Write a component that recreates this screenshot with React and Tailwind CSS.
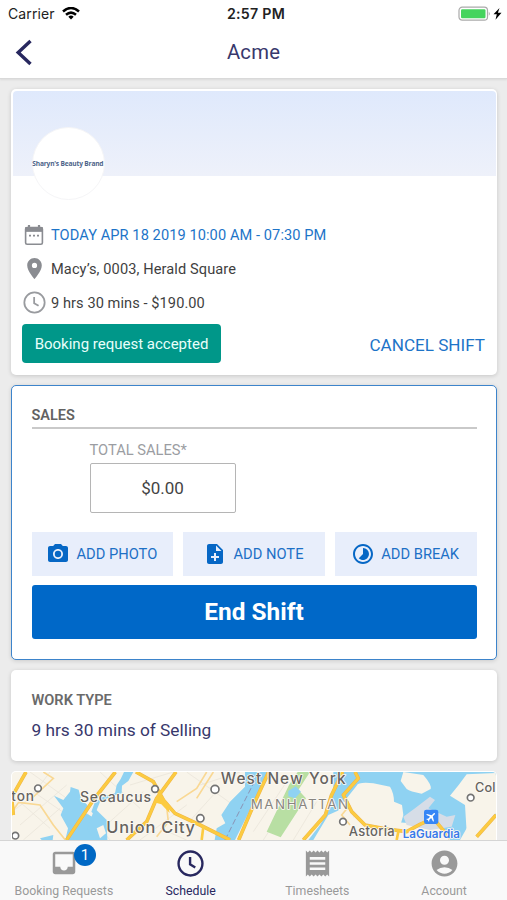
import React from "react";
import {
  MdPlace,
  MdPhotoCamera,
  MdNoteAdd,
  MdTimelapse,
  MdInbox,
  MdReceipt,
  MdAccountCircle,
} from "react-icons/md";

function StatusBar() {
  return (
    <div className="grid h-[27px] grid-cols-[1fr_auto_1fr] items-center font-['Inter'] text-[14px] leading-[27px] text-[#222]">
      <div className="flex items-center pl-[8px]">
        <span className="tracking-[0.1px]">Carrier</span>
        <svg className="ml-[7px] h-[13px] w-[18px]" viewBox="0 0 18 13" fill="none" stroke="#000" strokeWidth="2.5">
          <path d="M1 4.500Q9-2.500 17 4.500" />
          <path d="M4 7.800Q9 3.400 14 7.800" />
          <path d="M6.3 9.800Q9 7.400 11.7 9.800L9 12.500Z" fill="#000" stroke="none" />
        </svg>
      </div>
      <span className="pl-[5px] text-[14.2px] font-semibold tracking-[0.25px]">2:57 PM</span>
      <div className="flex justify-end pr-[4px]">
        <svg className="h-[16px] w-[45px]" viewBox="0 0 45 16">
          <rect x="1" y="1.2" width="28.5" height="13" rx="3.2" fill="#fff" stroke="#aaa" strokeWidth="1.2" />
          <rect x="3" y="3.2" width="24.5" height="9" rx="1.2" fill="#45d45e" />
          <path d="M30.8 5.7q2 2 0 4z" fill="#aaa" />
          <path d="m41.500 2-6 6.300h3.300L37.500 13.700l6-7h-3.600z" fill="#000" />
        </svg>
      </div>
    </div>
  );
}

function Header() {
  return (
    <header className="h-[79px] shrink-0 border-b border-[#d9d9d9] bg-white shadow-[0_1px_2px_rgba(0,0,0,0.08)]">
      <StatusBar />
      <div className="grid h-[51px] grid-cols-[1fr_auto_1fr] items-center">
        <svg className="ml-[15px] h-[28px] w-[20px]" viewBox="0 0 20 28" fill="none" stroke="#28285f" strokeWidth="3.4">
          <path d="M15.5 2 3.2 13.4 15.5 25" />
        </svg>
        <h1 className="text-[20.3px] tracking-[0.2px] text-[#38386c]">Acme</h1>
      </div>
    </header>
  );
}

function CalendarIcon() {
  return (
    <svg className="h-[22px] w-[20px]" viewBox="0 0 20 22" fill="none" stroke="#8a8c91">
      <rect x="1.6" y="3.6" width="16.8" height="16.6" rx="1.5" strokeWidth="1.6" />
      <path d="M1.6 3.6h16.8v3.7H1.6z" fill="#8a8c91" />
      <path d="M5 1v3M15 1v3" strokeWidth="2.2" />
      <path d="M5 11.6h2M9 11.6h2M13 11.6h2" strokeWidth="1.8" />
    </svg>
  );
}

function ClockIcon({ className, stroke, width }) {
  return (
    <svg className={className} viewBox="0 0 26 26" fill="none" stroke={stroke} strokeWidth={width}>
      <circle cx="13" cy="13" r="11.5" />
      <path d="M12.6 6.8v7l5 3" />
    </svg>
  );
}

function InfoRow({ icon, children, className = "text-[#3f3f3f]" }) {
  return (
    <div className={"flex h-[34px] items-center whitespace-nowrap text-[14.6px] " + className}>
      <span className="mr-[6px] ml-px flex w-[22px] justify-center">{icon}</span>
      {children}
    </div>
  );
}

function BookingCard() {
  return (
    <section className="h-[286px] shrink-0 rounded-[5px] bg-white p-[1.5px] shadow-[0_1px_4px_rgba(0,0,0,0.16)]">
      <div className="h-[85px] rounded-t-[4px] bg-linear-to-b from-[#dfe9fc] to-[#eef1fa] pt-[36px] pl-[19px]">
        <div className="flex h-[73px] w-[73px] items-center justify-center rounded-full border border-[#f5f5f7] bg-white">
          <span className="scale-x-[0.85] whitespace-nowrap pt-[2px] font-['Open_Sans'] text-[7.8px] font-bold tracking-[-0.22px] text-[#4d6489]">
            Sharyn's Beauty Brand
          </span>
        </div>
      </div>
      <div className="pr-[10.5px] pl-[9.5px] pt-[42px]">
        <InfoRow icon={<CalendarIcon />} className="text-[#1d74c8]">
          <span className="pt-[2px] tracking-[0.08px]">TODAY APR 18 2019 10:00 AM - 07:30 PM</span>
        </InfoRow>
        <InfoRow icon={<MdPlace className="h-[25px] w-[25px] shrink-0 text-[#8a8c91]" />}>
          <span className="pt-[2px] tracking-[0.1px]">Macy’s, 0003, Herald Square</span>
        </InfoRow>
        <InfoRow icon={<ClockIcon className="h-[23px] w-[23px] shrink-0" stroke="#999b9f" width="2" />}>
          <span className="pt-[2px] tracking-[0.07px]">9 hrs 30 mins - $190.00</span>
        </InfoRow>
        <div className="mt-[4.5px] flex items-center justify-between">
          <div className="flex h-[39px] w-[199px] items-center justify-center rounded-[4px] bg-[#009789] pt-[2px] text-[15px] text-[#e8fffb]">
            Booking request accepted
          </div>
          <span className="pt-[5px] text-[17.1px] text-[#1d74c8]">CANCEL SHIFT</span>
        </div>
      </div>
    </section>
  );
}

function ActionButton({ icon, children }) {
  return (
    <button className="flex h-[43.5px] items-center justify-center gap-[6px] whitespace-nowrap bg-[#e8eefb] pr-px text-[14.7px] text-[#1d70c6]">
      {icon}
      <span className="pt-px">{children}</span>
    </button>
  );
}

function SalesCard() {
  return (
    <section className="mt-[10px] h-[275px] shrink-0 rounded-[5px] border-[1.5px] border-[#3d84cb] bg-white px-[19.5px] pt-[19px] shadow-[0_1px_4px_rgba(0,0,0,0.14)]">
      <h2 className="h-[24px] border-b-2 border-[#c9c9c9] pt-px text-[14.5px] leading-[20px] font-semibold text-[#626262]">SALES</h2>
      <div className="ml-[58px] w-[146px] pt-[11px]">
        <label className="block h-[23px] text-[14.7px] leading-[20px] text-[#9b9da2]">TOTAL SALES*</label>
        <div className="flex h-[50px] items-center justify-center rounded-[2px] border border-[#b5b5b5] pt-[2px] text-[17px] text-[#444]">$0.00</div>
      </div>
      <div className="mt-[19px] grid grid-cols-3 gap-[10px]">
        <ActionButton icon={<MdPhotoCamera className="h-[24px] w-[24px] text-[#0667c5]" />}>ADD PHOTO</ActionButton>
        <ActionButton icon={<MdNoteAdd className="h-[24px] w-[24px] text-[#0667c5]" />}>ADD NOTE</ActionButton>
        <ActionButton icon={<MdTimelapse className="h-[24px] w-[24px] text-[#0667c5]" />}>ADD BREAK</ActionButton>
      </div>
      <button className="mt-[9.5px] flex h-[54px] w-full items-center justify-center rounded-[3px] bg-[#0068c8] text-[24.4px] font-bold text-white">
        End Shift
      </button>
    </section>
  );
}

function WorkTypeCard() {
  return (
    <section className="mt-[10px] h-[91px] shrink-0 rounded-[5px] bg-white px-[20.5px] pt-[20px] shadow-[0_1px_4px_rgba(0,0,0,0.16)]">
      <h2 className="text-[14.6px] leading-[20px] font-semibold text-[#6a6a6a]">WORK TYPE</h2>
      <p className="mt-[9px] text-[17.3px] leading-[22px] text-[#38386c]">9 hrs 30 mins of Selling</p>
    </section>
  );
}

function MapCard() {
  return (
    <section className="mt-[10px] h-[80px] shrink-0 rounded-t-[5px] bg-white p-px">
      <svg className="block h-[68px] w-full rounded-t-[4px]" viewBox="36 21 1452 204" preserveAspectRatio="none">
        <rect x="36" y="21" width="1452" height="204" fill="#f8f4ea" />
        {/* street grid */}
        <g fill="none" stroke="#ebe6db" strokeWidth="2.5">
          <path d="M36 140 90 100 150 21M60 180 200 60M36 90 150 190M70 225 180 130M100 80 230 170M90 21 200 100M300 21 420 130M250 130 330 225M390 60 520 21M330 170 430 80M420 225 560 120M560 21 700 120M540 200 640 90M600 60 720 21M480 190 560 225M790 225 920 21M760 200 860 50M960 225 1010 80M880 225 950 110M1040 180 1100 110 1160 190M1070 130 1190 140M1040 200 1160 215M1410 60 1488 90M1420 130 1488 110M1440 21 1420 190" />
        </g>
        {/* water */}
        <g fill="#8fd2f2">
          <path d="M162 92 190 105 210 80 212 66 236 74 243 102 262 120 258 145 284 160 290 180 302 190 318 225 196 225 204 190 182 150 190 130Z" />
          <path d="M350 60 362 42 372 21 400 21 385 48 366 62 365 85 340 92 300 110 284 150 274 140 285 110 310 95 345 84Z" />
          <path d="M284 130 320 165 322 225 280 225 262 190Z" />
          <path d="M735 21 815 21 790 65 765 105 735 165 705 225 644 225 650 190 676 175 664 150 690 110 735 65Z" />
          <path d="M1000 21 1488 21 1488 150 1440 165 1400 190 1380 225 1350 225 1330 190 1240 175 1190 172 1150 182 1090 155 1050 110 1020 110 1010 170 965 225 925 225 960 180 990 130 1000 80Z" />
          <path d="M120 220 160 210 158 225 125 225Z" />
        </g>
        {/* land between the channels */}
        <g fill="#f8f4ea">
          <path d="M1070 62Q1075 50 1120 55L1170 65Q1182 85 1182 110L1206 120 1210 150 1200 185 1110 185 1070 150 1040 100Z" />
          <path d="M1210 21 1270 30Q1296 60 1292 72L1265 86Q1230 80 1220 72L1202 48Z" />
          <path d="M1376 60 1400 28 1488 24 1488 145 1460 175 1400 202 1395 120 1350 92Z" />
          <path d="M985 150 1030 130 1100 195 1160 195 1160 225 940 225Z" />
          <path d="M290 190 310 180 318 205 300 220Z" />
        </g>
        <path d="M1210 155 1245 130 1290 95 1305 105 1285 130 1340 155 1366 150 1355 185 1290 195 1220 180Z" fill="#d6dde7" />
        <path d="M867 60 893 21 930 21 895 75 918 100 842 217 800 200Z" fill="#b8dfa3" />
        <path d="m865 78 22-14 16 16-18 20-20-6z" fill="#8fd2f2" />
        <path d="M675 225 735 105 778 21" fill="none" stroke="#8a93b5" strokeWidth="3" strokeDasharray="18 8" />
        {/* minor roads */}
        <g fill="none" stroke="#f9d894" strokeWidth="5">
          <path d="M36 140 56 112 120 120 160 180 196 225M130 21 160 40 90 105M530 110 590 70 620 21M470 215 505 170 500 125M590 100 640 21M1050 120 1025 150 1050 180" />
        </g>
        {/* highways */}
        <g fill="none" stroke="#eeb64a" strokeWidth="11" strokeLinejoin="round">
          <path d="M78 21 36 95M346 21 280 105 200 225M36 110 40 150" />
          <path d="M408 21 460 50 490 105 525 145 600 180 690 225M528 21 470 100 440 170 380 225" />
          <path d="M806 21 765 110 716 225M1028 21 994 92 976 150 910 225M1065 21 1075 40 1030 90 1055 140 1095 180 1160 192 1220 200 1260 178 1300 160 1350 220M1488 150 1430 215" />
        </g>
        <g fill="none" stroke="#fccb40" strokeWidth="8" strokeLinejoin="round">
          <path d="M78 21 36 95M346 21 280 105 200 225M36 110 40 150" />
          <path d="M408 21 460 50 490 105 525 145 600 180 690 225M528 21 470 100 440 170 380 225M610 185 605 225" />
          <path d="M806 21 765 110 716 225M1028 21 994 92 976 150 910 225M1065 21 1075 40 1030 90 1055 140 1095 180 1160 192 1220 200 1260 178 1300 160 1350 220M1488 150 1430 215M1190 225 1195 200" />
        </g>
        <path d="m462 112 22-24 20 30 5 26-25-26z" fill="#fccb40" />
        <g fill="#fff" stroke="#747474" strokeWidth="5">
          <circle cx="114" cy="70" r="10" />
          <circle cx="465" cy="72" r="10" />
          <circle cx="645" cy="73" r="12" />
          <circle cx="601" cy="160" r="11" />
          <circle cx="46" cy="212" r="10" />
          <circle cx="1029" cy="170" r="10" />
          <circle cx="1412" cy="98" r="10" />
        </g>
        <g fontFamily="Inter, sans-serif" fontWeight="500" fill="#66635f" stroke="#fcfaf5" strokeWidth="5" paintOrder="stroke" strokeLinejoin="round">
          <text x="34" y="108" fontSize="41" textLength="68">ton</text>
          <text x="240" y="111" fontSize="42" textLength="213">Secaucus</text>
          <text x="319" y="203" fontSize="49" textLength="266">Union City</text>
          <text x="662" y="56" fontSize="46" textLength="375">West New York</text>
          <text x="752" y="131" fontSize="40" fontWeight="400" fill="#88857f" textLength="292">MANHATTAN</text>
          <text x="1046" y="212" fontSize="39" textLength="138">Astoria</text>
          <text x="1425" y="82" fontSize="38" textLength="61">Col</text>
          <text x="1208" y="219" fontSize="35" fontWeight="600" fill="#3a7bea" textLength="172">LaGuardia</text>
        </g>
        <rect x="1272" y="134" width="43" height="43" rx="7" fill="#3686f6" />
        <path
          d="M21 16v-2l-8-5V3.500a1.500 1.500 0 0 0-3 0V9l-8 5v2l8-2.500V19l-2 1.500V22l3.500-1 3.500 1v-1.500L13 19v-5.500z"
          fill="#fff"
          transform="translate(1293.500 155.500) rotate(45) scale(1.550) translate(-11.500 -12)"
        />
      </svg>
    </section>
  );
}

function Tab({ icon, label, active }) {
  return (
    <div className={"flex flex-col items-center pt-[7px] pl-px text-[12.3px] " + (active ? "text-[#28285f]" : "text-[#999]")}>
      <div className="relative flex h-[30px] items-center">{icon}</div>
      <span className="mt-[5px] leading-[17px] whitespace-nowrap">{label}</span>
    </div>
  );
}

function TabBar() {
  return (
    <nav className="grid h-[60px] shrink-0 grid-cols-4 border-t border-[#d5d5d5] bg-[#f9f9f9]">
      <Tab
        label="Booking Requests"
        icon={
          <>
            <MdInbox className="h-[30px] w-[30px]" />
            <span className="absolute -top-[4px] left-[25px] flex h-[22px] w-[22px] items-center justify-center rounded-full bg-[#0068c4] text-[15px] text-white">
              1
            </span>
          </>
        }
      />
      <Tab active label="Schedule" icon={<ClockIcon className="h-[27px] w-[27px]" stroke="#28285f" width="2.3" />} />
      <Tab label="Timesheets" icon={<MdReceipt className="h-[31px] w-[31px]" />} />
      <Tab label="Account" icon={<MdAccountCircle className="h-[31px] w-[31px]" />} />
    </nav>
  );
}

export default function App() {
  return (
    <div className="flex h-[900px] w-[507px] flex-col overflow-hidden bg-[#ececec] font-['Roboto',sans-serif]">
      <Header />
      <main className="flex min-h-0 flex-1 flex-col overflow-hidden px-[11px] pr-[10px] pt-[10px]">
        <BookingCard />
        <SalesCard />
        <WorkTypeCard />
        <MapCard />
      </main>
      <TabBar />
    </div>
  );
}
